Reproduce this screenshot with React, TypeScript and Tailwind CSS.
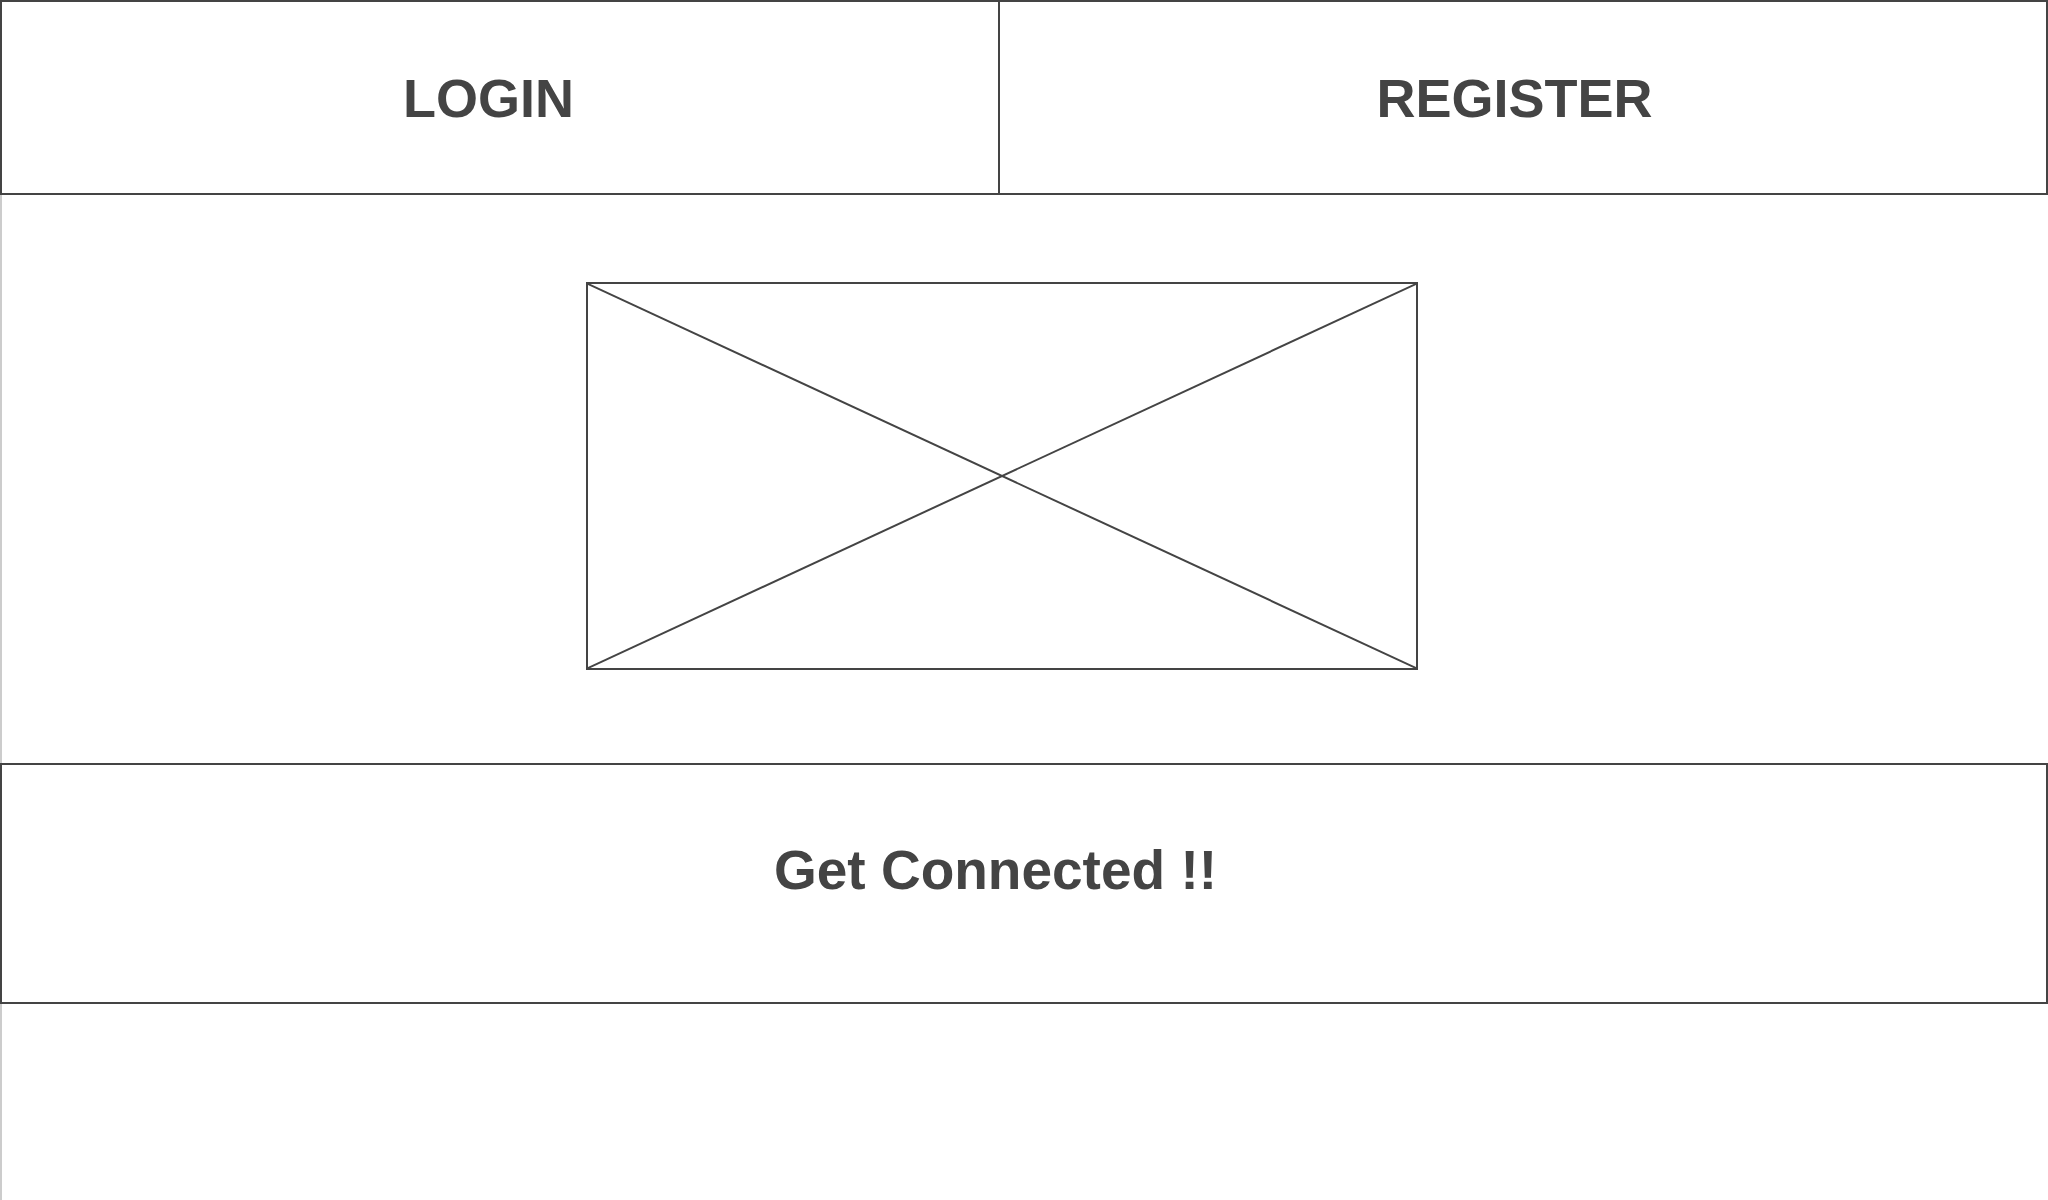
const font = { fontFamily: '"Liberation Sans", Arial, sans-serif' };

const ImagePlaceholder = () => (
  <div className="relative ml-[584px] h-[388px] w-[832px] border-2 border-[#444444]">
    {/* crossed-out image placeholder */}
    <svg className="absolute inset-0 h-full w-full" viewBox="0 0 100 100" preserveAspectRatio="none">
      <line x1="0" y1="0" x2="100" y2="100" stroke="#444444" strokeWidth="2" vectorEffect="non-scaling-stroke" />
      <line x1="100" y1="0" x2="0" y2="100" stroke="#444444" strokeWidth="2" vectorEffect="non-scaling-stroke" />
    </svg>
  </div>
);

export default function App() {
  return (
    <div className="h-[1200px] w-[2048px] overflow-hidden bg-white text-[#444444]" style={font}>
      <header className="flex h-[195px] w-[2048px] border-2 border-[#444444]">
        <div className="flex w-[998px] items-center justify-center border-r-2 border-[#444444] pr-[23px]">
          <span className="text-[54px] font-bold leading-none">LOGIN</span>
        </div>
        <div className="flex flex-1 items-center justify-center pr-[17px]">
          <span className="text-[54px] font-bold leading-none">REGISTER</span>
        </div>
      </header>

      <main className="flex h-[1005px] flex-col border-l-2 border-[#cccccc] pt-[87px]">
        <ImagePlaceholder />
        <section className="-ml-[2px] mt-[93px] flex h-[241px] w-[2048px] items-center justify-center border-2 border-[#444444] pb-[26px] pr-[57px]">
          <span className="text-[55px] font-bold leading-none">Get Connected !!</span>
        </section>
      </main>
    </div>
  );
}
